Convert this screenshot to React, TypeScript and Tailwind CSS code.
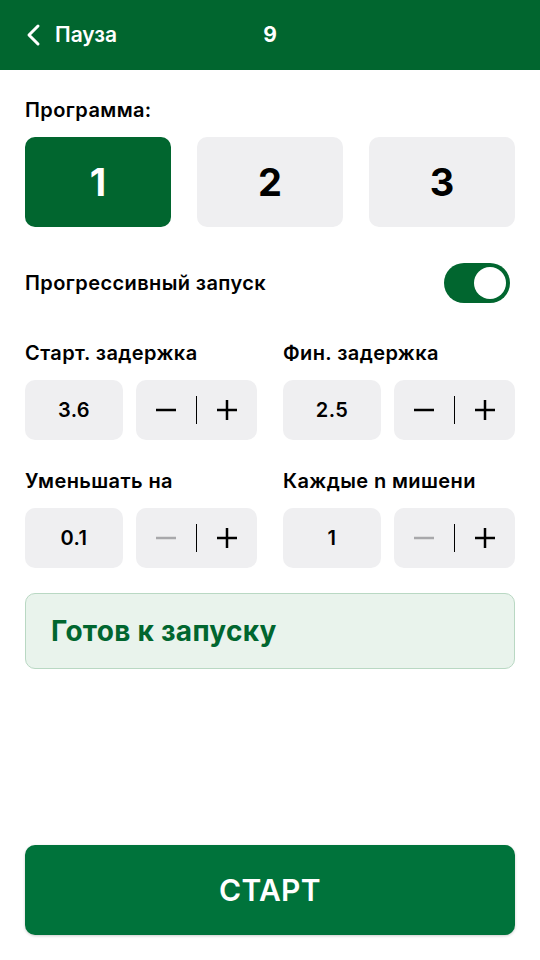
import React from 'react';

const font = { fontFamily: 'Inter, "Noto Sans", sans-serif' };

interface StepperProps {
  value: string;
  canDecrease: boolean;
}

const Stepper: React.FC<StepperProps> = ({ value, canDecrease }) => (
  <div className="flex gap-[13px]">
    <div className="flex h-[60px] w-[98px] items-center justify-center rounded-[10px] bg-[#efeff1] text-[20px] font-semibold tracking-[0.02em] text-black">
      {value}
    </div>
    <div className="flex h-[60px] flex-1 items-center justify-center rounded-[10px] bg-[#efeff1]">
      <svg width="22" height="22" viewBox="0 0 22 22">
        <line x1="1" y1="11" x2="21" y2="11" stroke={canDecrease ? '#000' : '#a8a8ab'} strokeWidth="2.5" />
      </svg>
      <div className="mx-[19px] h-[28px] w-[1.5px] bg-black" />
      <svg width="22" height="22" viewBox="0 0 22 22">
        <line x1="1" y1="11" x2="21" y2="11" stroke="#000" strokeWidth="2.5" />
        <line x1="11" y1="1" x2="11" y2="21" stroke="#000" strokeWidth="2.5" />
      </svg>
    </div>
  </div>
);

const Field: React.FC<{ label: string; value: string; canDecrease: boolean }> = ({ label, value, canDecrease }) => (
  <div className="flex flex-col gap-[16px]">
    <div className="text-[20px] font-semibold leading-[22px] tracking-[0.02em] text-black">{label}</div>
    <Stepper value={value} canDecrease={canDecrease} />
  </div>
);

export default function App() {
  return (
    <div className="flex h-[960px] w-[540px] flex-col bg-white" style={font}>
      <header className="grid h-[70px] grid-cols-[1fr_auto_1fr] items-center bg-[#01662f] px-[25px] text-white">
        <div className="flex items-center gap-[14px]">
          <svg width="16" height="24" viewBox="0 0 16 24">
            <polyline points="13,3 4,12 13,21" fill="none" stroke="#fff" strokeWidth="3" strokeLinecap="round" strokeLinejoin="round" />
          </svg>
          <span className="text-[21px] font-semibold">Пауза</span>
        </div>
        <span className="text-[21px] font-bold">9</span>
        <div />
      </header>

      <main className="flex flex-1 flex-col px-[25px] pb-[25px]">
        <div className="mt-[29px] text-[20px] font-semibold leading-[22px] tracking-[0.02em] text-black">
          Программа:
        </div>
        <div className="mt-[16px] grid grid-cols-3 gap-[26px]">
          <button className="flex h-[90px] items-center justify-center rounded-[10px] bg-[#01662f] text-[38px] font-bold text-white">1</button>
          <button className="flex h-[90px] items-center justify-center rounded-[10px] bg-[#efeff1] text-[38px] font-bold text-black">2</button>
          <button className="flex h-[90px] items-center justify-center rounded-[10px] bg-[#efeff1] text-[38px] font-bold text-black">3</button>
        </div>

        <div className="mt-[36px] flex items-center justify-between">
          <span className="text-[20px] font-semibold tracking-[0.02em] text-black">Прогрессивный запуск</span>
          <div className="mr-[5px] flex h-[40px] w-[66px] items-center justify-end rounded-full bg-[#01662f] px-[4px]">
            <div className="h-[32px] w-[32px] rounded-full bg-white" />
          </div>
        </div>

        <div className="mt-[39px] grid grid-cols-2 gap-x-[26px] gap-y-[30px]">
          <Field label="Старт. задержка" value="3.6" canDecrease />
          <Field label="Фин. задержка" value="2.5" canDecrease />
          <Field label="Уменьшать на" value="0.1" canDecrease={false} />
          <Field label="Каждые n мишени" value="1" canDecrease={false} />
        </div>

        <div className="mt-[25px] flex h-[76px] items-center rounded-[10px] border border-[#b9d8c3] bg-[#e9f3ec] px-[25px]">
          <span className="text-[28px] font-bold tracking-[0.01em] text-[#01662f]">Готов к запуску</span>
        </div>

        <div className="flex-1" />

        <button className="flex h-[90px] items-center justify-center rounded-[10px] bg-[#00733b] text-[30px] font-semibold tracking-[0.01em] text-white shadow-[0_1px_3px_rgba(0,0,0,0.2)]">
          СТАРТ
        </button>
      </main>
    </div>
  );
}
